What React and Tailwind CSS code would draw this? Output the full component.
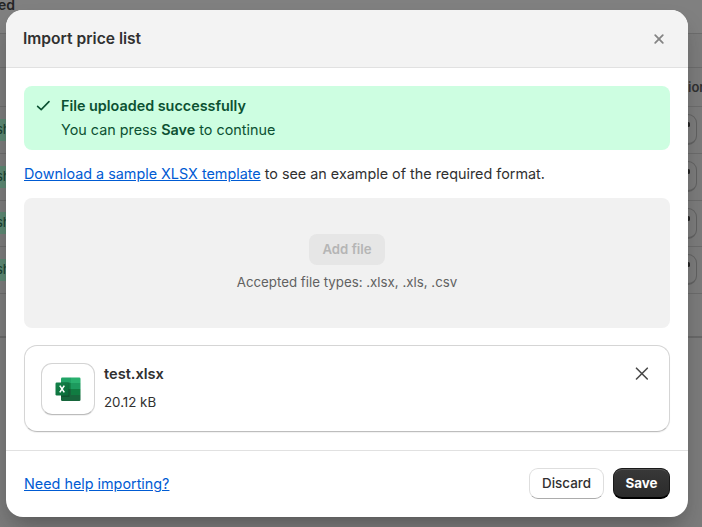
import React from "react";

const ROWS = [
  "h-[47px]",
  "h-[47px]",
  "h-[46px]",
  "h-[47px]",
];

function Backdrop() {
  return (
    <div className="flex h-[527px] w-[702px] flex-col overflow-hidden bg-[#7b7b7b] text-[#252525]">
      <div className="flex h-[33px] items-start bg-[#808080]">
        <span className="-ml-[2px] -mt-[5px] text-[14px] font-semibold leading-5">ed</span>
      </div>
      <div className="h-[35px] border-b border-t border-[#6c6c6c]" />
      <div className="flex h-[39px] items-center justify-end border-b border-[#6c6c6c] pt-[2px]">
        <span className="w-[14px] whitespace-nowrap text-[13px] font-semibold text-[#303030]">ion</span>
      </div>
      {ROWS.map((height, i) => (
        <div key={i} className={`flex shrink-0 items-center justify-between border-b border-[#6b6b6b] ${height}`}>
          <span className="mb-[1px] flex h-[22px] w-6 items-center bg-[#5c8873] text-[13px] text-[#173d2d]"><span className="-ml-[4px]">sh</span></span>
          <span className="mb-[1px] mr-[5px] flex h-[31px] w-8 items-start justify-end rounded-[9px] border border-b-2 border-[#616161] pr-[6px] pt-[7px]">
            <span className="h-[5px] w-[3px] rounded-full bg-[#222]" />
          </span>
        </div>
      ))}
      <div className="h-[44px] border-b-2 border-[#686868]" />
      <div className="flex-1" />
    </div>
  );
}

function Check() {
  return (
    <svg className="mt-[2px] h-5 w-5 shrink-0" viewBox="0 0 20 20" fill="none" stroke="#0c5132" strokeWidth="1.6" strokeLinecap="round" strokeLinejoin="round">
      <path d="M4.6 10.3 8.2 13.6 16 5.6" />
    </svg>
  );
}

function ExcelIcon() {
  return (
    <svg className="h-[25px] w-[26px]" viewBox="0 0 26 25">
      <defs>
        <clipPath id="sheet"><rect x="6" y="0.5" width="19.5" height="23.5" rx="1.2" /></clipPath>
        <linearGradient id="tile" x1="0" y1="0" x2="1" y2="1">
          <stop offset="0" stopColor="#13834a" />
          <stop offset="1" stopColor="#0b6a38" />
        </linearGradient>
      </defs>
      <g clipPath="url(#sheet)">
        <path fill="#21a366" d="M6 0h10v6H6z" />
        <path fill="#29b06e" d="M16 0h10v6H16z" />
        <path fill="#14864a" d="M6 6h10v6H6z" />
        <path fill="#1d9a5e" d="M16 6h10v6H16z" />
        <path fill="#17663c" d="M6 12h10v13H6z" />
        <path fill="#107c41" d="M16 12h10v6H16z" />
        <path fill="#17663c" d="M16 18h10v7H16z" />
        <path fill="#000" opacity=".18" d="M5 5h9.5v15H5z" />
      </g>
      <rect x="0.5" y="5.5" width="13" height="13" rx="1.2" fill="url(#tile)" />
      <path d="m4.8 8.6 4.5 6.8M9.3 8.6l-4.5 6.8" stroke="#fff" strokeWidth="1.6" />
    </svg>
  );
}

export default function App() {
  return (
    <div className="relative h-[527px] w-[702px] overflow-hidden font-['Inter',sans-serif] text-[#303030]">
      <Backdrop />
      <div role="dialog" className="absolute left-[6px] top-[10px] flex h-[507px] w-[682px] flex-col overflow-hidden rounded-[17px] bg-white shadow-[0_12px_22px_-6px_rgba(26,26,26,0.38)]">
        <header className="flex h-[58px] shrink-0 items-center justify-between border-b border-[#e1e1e1] bg-[#f3f3f3] pl-[17px] pr-[23px]">
          <h2 className="text-[15.6px] font-semibold leading-5">Import price list</h2>
          <button aria-label="Close">
            <svg className="mt-[1px] h-3 w-3" viewBox="0 0 12 12" fill="none" stroke="#848484" strokeWidth="1.8" strokeLinecap="round">
              <path d="m2.2 2.2 7.6 7.6M9.8 2.2 2.2 9.8" />
            </svg>
          </button>
        </header>

        <main className="flex h-[382px] shrink-0 flex-col px-[18px] pt-[18px]">
          <section className="flex h-[64px] gap-[8px] rounded-[8px] bg-[#cdfee1] pl-[9px] pt-[8px] text-[14.37px] leading-6 text-[#0c5132]">
            <Check />
            <div>
              <p className="font-semibold">File uploaded successfully</p>
              <p>You can press <b className="font-semibold">Save</b> to continue</p>
            </div>
          </section>

          <p className="mt-[12px] text-[14.37px] leading-6">
            <a className="text-[#005bd3] underline">Download a sample XLSX template</a> to see an example of the required format.
          </p>

          <section className="mt-[12px] flex h-[130px] shrink-0 flex-col items-center rounded-[8px] bg-[#f1f1f1] pt-[36px]">
            <button className="h-[31px] w-[76px] rounded-[8px] bg-[#e6e6e6] text-[13.2px] font-semibold text-[#b5b5b5]">Add file</button>
            <p className="mt-[7px] text-[13.3px] leading-5 text-[#616161]">Accepted file types: .xlsx, .xls, .csv</p>
          </section>

          <section className="mt-[17px] flex h-[87px] shrink-0 rounded-[13px] border border-[#d5d5d5] border-b-[#bdbdbd] pl-[16px] pr-[20px] pt-[17px] shadow-[0_1px_1px_rgba(0,0,0,0.06)]">
            <div className="flex h-[52px] w-[54px] items-center justify-center rounded-[11px] border border-[#d4d4d4] border-b-[#bcbcbc] shadow-[0_1px_0_rgba(0,0,0,0.05)]">
              <ExcelIcon />
            </div>
            <div className="ml-[9px] flex flex-1 flex-col">
              <p className="text-[14.6px] font-semibold leading-[22px]">test.xlsx</p>
              <p className="mt-[7px] text-[13.3px] leading-5">20.12 kB</p>
            </div>
            <button aria-label="Remove file" className="mt-[4px] h-[13px] w-[14px]">
              <svg className="h-[13px] w-[14px]" viewBox="0 0 14 13" fill="none" stroke="#4a4a4a" strokeWidth="1.6" strokeLinecap="round">
                <path d="M1.5 1.2 12.3 12M12.3 1.2 1.5 12" />
              </svg>
            </button>
          </section>
        </main>

        <footer className="flex h-[67px] items-center border-t border-[#e1e1e1] px-[18px]">
          <a className="text-[14.37px] leading-5 text-[#005bd3] underline">Need help importing?</a>
          <button className="mb-[2px] ml-auto h-[31px] w-[75px] rounded-[9px] border border-[#dedede] border-b-[#acacac] bg-white text-[13.4px] font-medium">Discard</button>
          <button className="mb-[2px] ml-[9px] h-[31px] w-[57px] rounded-[9px] border border-b-2 border-[#1a1a1a] border-b-black bg-[#303030] bg-linear-to-b from-[#383838] to-[#2b2b2b] pt-[1px] text-[13.4px] font-bold text-white shadow-[inset_0_1px_0_#555]">Save</button>
        </footer>
      </div>
    </div>
  );
}
